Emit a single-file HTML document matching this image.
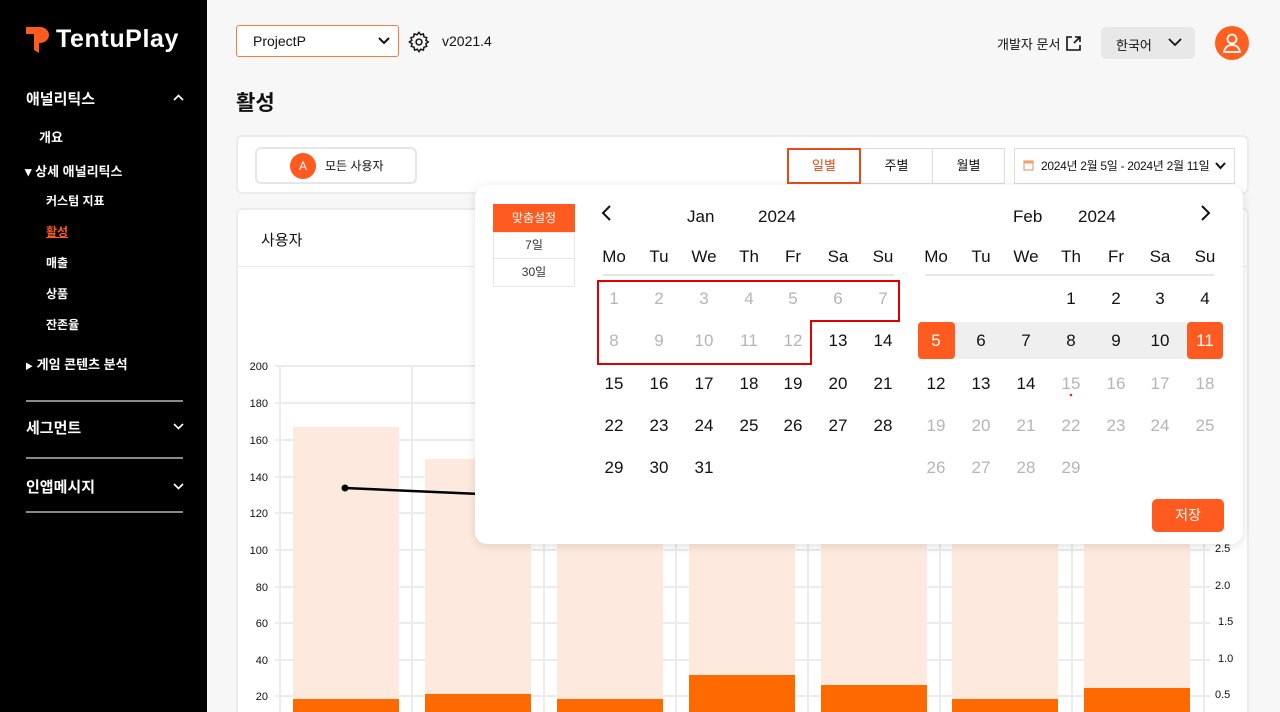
<!DOCTYPE html>
<html><head><meta charset="utf-8">
<style>
*{margin:0;padding:0;box-sizing:border-box}
html,body{width:1280px;height:712px;overflow:hidden}
body{background:#f7f7f7;font-family:"Liberation Sans","Noto Sans CJK KR",sans-serif;position:relative;color:#111}
.a{position:absolute}
.sb{left:0;top:0;width:207px;height:712px;background:#000;color:#fff}
.sb .a{white-space:nowrap}
.hr{height:2px;background:#8a8a8a;left:26px;width:157px}
.card{background:#fff;border:2px solid #ececec;border-radius:6px}
.c{text-align:center;font-size:17px;width:40px;margin-left:-20px}
.g{color:#b5b5b5}
.w{color:#fff}
</style></head><body>
<div class="a sb">
  <svg class="a" style="left:26px;top:27px" width="24" height="26" viewBox="0 0 24 26"><path d="M0 0H14A9 8 0 0 1 14 16H13V26L8 23V7H0Z" fill="#ff5a1f"/></svg>
  <div class="a" style="left:56px;top:25px;font-size:25px;font-weight:bold;letter-spacing:0.6px">TentuPlay</div>
  <div class="a" style="left:26px;top:88px;font-size:15px;font-weight:bold">애널리틱스</div>
  <svg class="a" style="left:173px;top:94px" width="11" height="7"><path d="M1 6L5.5 1.5L10 6" stroke="#fff" stroke-width="1.6" fill="none"/></svg>
  <div class="a" style="left:39px;top:127px;font-size:13px;font-weight:bold">개요</div>
  <div class="a" style="left:25px;top:161px;font-size:13px;font-weight:bold">▾ 상세 애널리틱스</div>
  <div class="a" style="left:46px;top:192px;font-size:12px;font-weight:bold">커스텀 지표</div>
  <div class="a" style="left:46px;top:223px;font-size:12px;font-weight:bold;color:#ff5a1f;text-decoration:underline">활성</div>
  <div class="a" style="left:46px;top:254px;font-size:12px;font-weight:bold">매출</div>
  <div class="a" style="left:46px;top:285px;font-size:12px;font-weight:bold">상품</div>
  <div class="a" style="left:46px;top:316px;font-size:12px;font-weight:bold">잔존율</div>
  <div class="a" style="left:25px;top:354px;font-size:13px;font-weight:bold"><span style="font-size:8px">▶</span> 게임 콘텐츠 분석</div>
  <div class="a hr" style="top:400px"></div>
  <div class="a" style="left:26px;top:417px;font-size:15px;font-weight:bold">세그먼트</div>
  <svg class="a" style="left:173px;top:423px" width="11" height="7"><path d="M1 1L5.5 5.5L10 1" stroke="#fff" stroke-width="1.6" fill="none"/></svg>
  <div class="a hr" style="top:457px"></div>
  <div class="a" style="left:26px;top:476px;font-size:15px;font-weight:bold">인앱메시지</div>
  <svg class="a" style="left:173px;top:483px" width="11" height="7"><path d="M1 1L5.5 5.5L10 1" stroke="#fff" stroke-width="1.6" fill="none"/></svg>
  <div class="a hr" style="top:511px"></div>
</div>

<div class="a" style="left:236px;top:25px;width:163px;height:32px;border:1px solid #f08040;border-radius:3px;background:#fff"></div>
<div class="a" style="left:253px;top:33px;font-size:14px">ProjectP</div>
<svg class="a" style="left:378px;top:37px" width="12" height="8"><path d="M1 1L6 6L11 1" stroke="#111" stroke-width="2" fill="none"/></svg>
<svg class="a" style="left:408px;top:31px" width="22" height="22" viewBox="0 0 24 24" fill="none" stroke="#111" stroke-width="1.6"><circle cx="12" cy="12" r="3.2"/><path d="M12 1.5l1.8 2.6 3-.9.6 3.1 3 .9-.9 3 2.6 1.8-2.6 1.8.9 3-3 .9-.6 3.1-3-.9L12 22.5l-1.8-2.6-3 .9-.6-3.1-3-.9.9-3L1.5 12l2.6-1.8-.9-3 3-.9.6-3.1 3 .9z"/></svg>
<div class="a" style="left:442px;top:33px;font-size:14px">v2021.4</div>
<div class="a" style="left:236px;top:87px;font-size:21px;font-weight:bold">활성</div>

<div class="a" style="left:997px;top:34px;font-size:13px">개발자 문서</div>
<svg class="a" style="left:1066px;top:36px" width="15" height="15" viewBox="0 0 15 15" fill="none" stroke="#111" stroke-width="1.6"><path d="M6 1H1V14H14V9M8 7L14 1M9 1H14V6"/></svg>
<div class="a" style="left:1101px;top:27px;width:94px;height:32px;background:#e8e8e8;border-radius:5px"></div>
<div class="a" style="left:1116px;top:35px;font-size:13px">한국어</div>
<svg class="a" style="left:1168px;top:38px" width="14" height="9"><path d="M1 1L7 7L13 1" stroke="#111" stroke-width="1.8" fill="none"/></svg>
<div class="a" style="left:1215px;top:26px;width:34px;height:34px;border-radius:50%;background:#ff6020"></div>
<svg class="a" style="left:1222px;top:32px" width="20" height="22" viewBox="0 0 20 22" fill="none" stroke="#fff" stroke-width="1.8"><circle cx="10" cy="7" r="4.5"/><path d="M2 20C3 15 6 13 10 13S17 15 18 20Z"/></svg>

<div class="a card" style="left:236px;top:135px;width:1013px;height:59px"></div>
<div class="a" style="left:255px;top:147px;width:162px;height:37px;border:2px solid #e6e6e6;border-radius:6px;background:#fff"></div>
<div class="a" style="left:290px;top:153px;width:26px;height:26px;border-radius:50%;background:#ff5a1f;color:#fff;font-size:12px;text-align:center;line-height:26px">A</div>
<div class="a" style="left:325px;top:157px;font-size:12px">모든 사용자</div>
<div class="a" style="left:787px;top:148px;width:74px;height:36px;border:2px solid #e84a1a;background:#fff;color:#e84a1a;font-size:13px;text-align:center;line-height:32px">일별</div>
<div class="a" style="left:861px;top:148px;width:72px;height:36px;border:1px solid #ddd;border-left:none;background:#fff;font-size:13px;text-align:center;line-height:34px">주별</div>
<div class="a" style="left:932px;top:148px;width:73px;height:36px;border:1px solid #ddd;background:#fff;font-size:13px;text-align:center;line-height:34px">월별</div>
<div class="a" style="left:1014px;top:148px;width:221px;height:36px;border:1px solid #ddd;background:#fff"></div>
<svg class="a" style="left:1023px;top:159px" width="11" height="12"><rect x="1" y="2" width="9" height="9" fill="none" stroke="#f0a070" stroke-width="1.2"/><rect x="1" y="2" width="9" height="2.5" fill="#f0a070"/></svg>
<div class="a" style="left:1041px;top:157px;font-size:12px;letter-spacing:-0.3px">2024년 2월 5일 - 2024년 2월 11일</div>
<svg class="a" style="left:1215px;top:162px" width="11" height="8"><path d="M1 1L5.5 6L10 1" stroke="#111" stroke-width="2" fill="none"/></svg>

<div class="a card" style="left:236px;top:208px;width:1013px;height:520px"></div>
<div class="a" style="left:261px;top:229px;font-size:15px">사용자</div>
<div class="a" style="left:238px;top:266px;width:1009px;height:1px;background:#ececec"></div>
<svg class="a" style="left:0;top:0" width="1280" height="712">
 <g stroke="#ececec" stroke-width="2">
  <path d="M275 366H1210M275 403H1210M275 440H1210M275 477H1210M275 513H1210M275 550H1210M275 587H1210M275 623H1210M275 660H1210M275 696H1210"/>
  <path d="M280 366V712M412 366V712M544 366V712M676 366V712M808 366V712M940 366V712M1072 366V712M1204 366V712"/>
 </g>
 <g fill="#fde9dd">
  <rect x="293" y="427" width="106" height="285"/><rect x="425" y="459" width="106" height="253"/><rect x="557" y="520" width="106" height="192"/><rect x="689" y="520" width="106" height="192"/><rect x="821" y="520" width="106" height="192"/><rect x="952" y="520" width="106" height="192"/><rect x="1084" y="520" width="106" height="192"/>
 </g>
 <g fill="#ff6a00">
  <rect x="293" y="699" width="106" height="13"/><rect x="425" y="694" width="106" height="18"/><rect x="557" y="699" width="106" height="13"/><rect x="689" y="675" width="106" height="37"/><rect x="821" y="685" width="106" height="27"/><rect x="952" y="699" width="106" height="13"/><rect x="1084" y="688" width="106" height="24"/>
 </g>
 <path d="M345 488L480 494" stroke="#000" stroke-width="2.5"/><circle cx="345" cy="488" r="3.5"/>
 <g font-size="11" font-family="Liberation Sans" text-anchor="end" fill="#111">
  <text x="268" y="370">200</text><text x="268" y="407">180</text><text x="268" y="444">160</text><text x="268" y="481">140</text><text x="268" y="517">120</text><text x="268" y="554">100</text><text x="268" y="591">80</text><text x="268" y="627">60</text><text x="268" y="664">40</text><text x="268" y="700">20</text>
 </g>
 <g font-size="11" font-family="Liberation Sans" fill="#111">
  <text x="1215" y="552">2.5</text><text x="1215" y="589">2.0</text><text x="1218" y="625">1.5</text><text x="1218" y="662">1.0</text><text x="1215" y="698">0.5</text>
 </g>
</svg>

<div class="a" style="left:475px;top:185px;width:768px;height:359px;background:#fff;border-radius:12px;box-shadow:0 2px 10px rgba(0,0,0,0.12)"></div>
<div class="a" style="left:493px;top:204px;width:82px;height:29px;background:#ff5a1f;color:#fff;font-size:12px;text-align:center;line-height:29px">맞춤설정</div>
<div class="a" style="left:493px;top:232px;width:82px;height:27px;border:1px solid #e6e6e6;font-size:12px;text-align:center;line-height:25px;color:#333">7일</div>
<div class="a" style="left:493px;top:259px;width:82px;height:28px;border:1px solid #e6e6e6;border-top:none;font-size:12px;text-align:center;line-height:26px;color:#333">30일</div>
<svg class="a" style="left:600px;top:205px" width="12" height="16"><path d="M10 1L3 8L10 15" stroke="#111" stroke-width="2" fill="none"/></svg>
<svg class="a" style="left:1200px;top:205px" width="12" height="16"><path d="M2 1L9 8L2 15" stroke="#111" stroke-width="2" fill="none"/></svg>
<div class="a" style="left:687px;top:207px;font-size:17px">Jan</div>
<div class="a" style="left:758px;top:207px;font-size:17px">2024</div>
<div class="a" style="left:1013px;top:207px;font-size:17px">Feb</div>
<div class="a" style="left:1078px;top:207px;font-size:17px">2024</div>
<div class="a" style="left:603px;top:274px;width:291px;height:2px;background:#e6e6e6"></div>
<div class="a" style="left:925px;top:274px;width:289px;height:2px;background:#e6e6e6"></div>
<div class="a" style="left:918px;top:322px;width:305px;height:37px;background:#efefef"></div>
<div class="a" style="left:918px;top:322px;width:37px;height:37px;background:#ff5a1f;border-radius:4px"></div>
<div class="a" style="left:1187px;top:322px;width:36px;height:37px;background:#ff5a1f;border-radius:4px"></div>
<svg class="a" style="left:0;top:0" width="1280" height="712"><path d="M598 281H899V321H811V364H598Z" fill="none" stroke="#e00000" stroke-width="2"/><circle cx="1071" cy="395" r="1.3" fill="#e03000"/></svg>
<div id="cal"></div>
<div class="a" style="left:1152px;top:499px;width:72px;height:33px;background:#ff5a1f;border-radius:5px;color:#fff;font-size:14px;text-align:center;line-height:33px">저장</div>
<script>
var h='',jx=[614,659,704,749,793,838,883],fx=[936,981,1026,1071,1116,1160,1205],ry=[289,331,374,416,458];
var d=['Mo','Tu','We','Th','Fr','Sa','Su'];
for(var i=0;i<7;i++){h+='<div class="a c" style="left:'+jx[i]+'px;top:247px">'+d[i]+'</div><div class="a c" style="left:'+fx[i]+'px;top:247px">'+d[i]+'</div>';}
for(var n=1;n<=31;n++){var k=n-1,c=k%7,r=Math.floor(k/7);h+='<div class="a c'+(n<=12?' g':'')+'" style="left:'+jx[c]+'px;top:'+ry[r]+'px">'+n+'</div>';}
for(var n=1;n<=29;n++){var k=n+2,c=k%7,r=Math.floor(k/7);var cl=n>=15?' g':((n==5||n==11)?' w':'');h+='<div class="a c'+cl+'" style="left:'+fx[c]+'px;top:'+ry[r]+'px">'+n+'</div>';}
document.getElementById('cal').innerHTML=h;
</script>
</body></html>
